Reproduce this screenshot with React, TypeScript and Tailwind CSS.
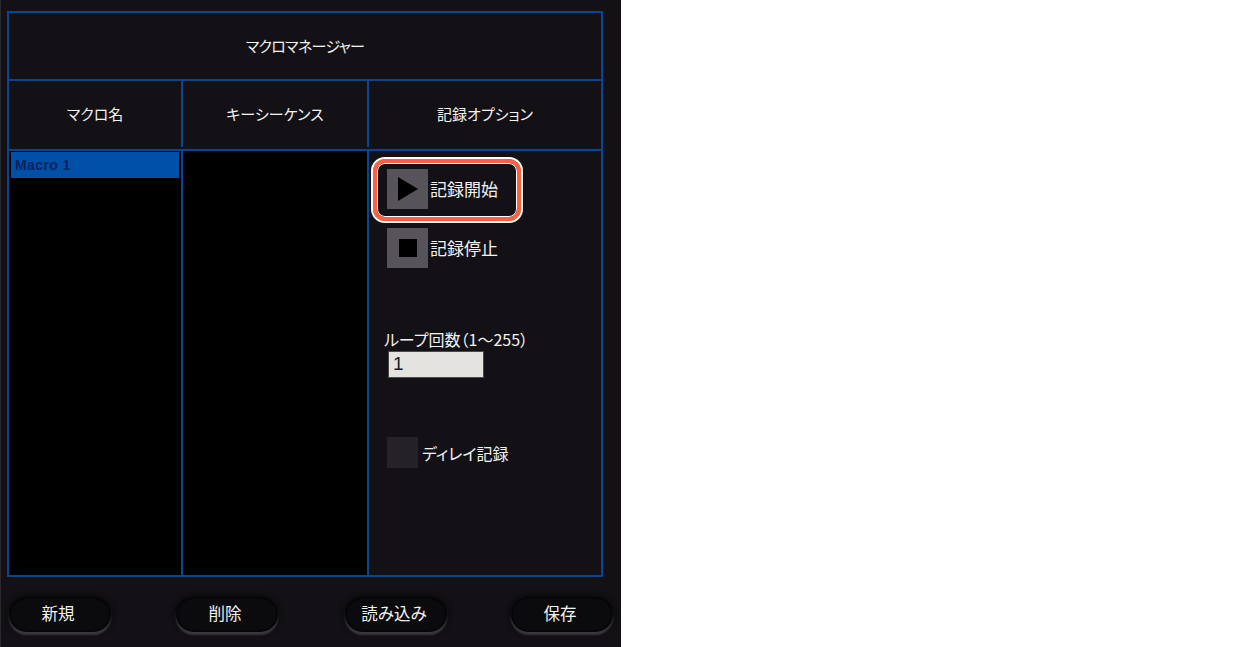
const font = "font-['Noto_Sans_CJK_JP',sans-serif] [font-feature-settings:'palt']";

function FooterButton({ label, className }: { label: string; className?: string }) {
  return (
    <div
      className={`w-[102px] h-[35px] pb-[3px] pr-[4px] rounded-[18px] bg-[#0b0a0c] border-2 border-[#060507] flex items-center justify-center text-[16.5px] text-[#f2f2f2] shadow-[0_3px_2px_#3a383d,0_0_5px_2px_#0a090b] ${className ?? ''}`}
    >
      {label}
    </div>
  );
}

export default function App() {
  return (
    <div className={`flex h-[647px] w-[1240px] bg-white overflow-hidden ${font}`}>
      <div className="w-[621px] h-full bg-[#131116] pl-[7px] pt-[11px] border-l border-[#2a282c]">
        <div className="w-[596px] h-[566px] -ml-px flex flex-col border-2 border-[#0a4590] text-[#f2f2f2]">
          <div className="h-[68px] flex items-center justify-center border-b-2 border-[#0a4590] text-[15px] tracking-[-0.7px]">
            マクロマネージャー
          </div>
          <div className="h-[70px] pb-[2px] grid grid-cols-[174px_186px_1fr] border-b-2 border-[#0a4590] text-[15px]">
            <div className="flex items-center justify-center border-r-2 border-[#0a4590]">マクロ名</div>
            <div className="flex items-center justify-center border-r-2 border-[#0a4590]">キーシーケンス</div>
            <div className="flex items-center justify-center">記録オプション</div>
          </div>
          <div className="flex-1 grid grid-cols-[174px_186px_1fr] min-h-0">
            <div className="bg-black border-r-2 border-[#0a4590] pt-[1px] pl-[2px]">
              <div className="w-[168px] h-[26px] bg-[#0050a8] pl-[4px] flex items-center text-[14px] font-bold tracking-[0.4px] text-[#03245e] font-['Liberation_Sans',sans-serif]">
                Macro 1
              </div>
            </div>
            <div className="bg-black border-r-2 border-[#0a4590]" />
            <div className="relative pl-[18px] pt-[18px] text-[17px]">
              <div className="absolute left-[4px] top-[8px] w-[148px] h-[62px] rounded-[12px] border-[4px] border-[#ff6040] outline-[2px] outline-solid outline-white shadow-[inset_0_0_0_1px_white]" />
              <div className="flex items-center h-[40px]">
                <div className="w-[41px] h-[40px] bg-[#57535a] flex items-center justify-center shrink-0">
                  <svg width="20" height="24" viewBox="0 0 20 24" className="ml-[1px]">
                    <path d="M0 0 L20 12 L0 24 Z" fill="#000" />
                  </svg>
                </div>
                <span className="ml-[2px]">記録開始</span>
              </div>
              <div className="flex items-center h-[40px] mt-[19px]">
                <div className="w-[41px] h-[40px] bg-[#57535a] flex items-center justify-center shrink-0">
                  <div className="w-[18px] h-[18px] bg-black" />
                </div>
                <span className="ml-[2px]">記録停止</span>
              </div>
              <div className="mt-[60px] -ml-[3px] text-[16px] leading-[22px]">ループ回数（1～255）</div>
              <div className="w-[96px] h-[27px] ml-[1px] mt-[1px] bg-[#e4e3df] border border-[#4a484c] pl-[4px] flex items-center text-[19px] text-[#16202c] font-['Liberation_Sans',sans-serif]">
                1
              </div>
              <div className="flex items-center mt-[59px]">
                <div className="w-[31px] h-[31px] bg-[#242227] shrink-0" />
                <span className="ml-[4px] text-[16px]">ディレイ記録</span>
              </div>
            </div>
          </div>
        </div>
        <div className="flex ml-[1px] mt-[20px]">
          <FooterButton label="新規" />
          <FooterButton label="削除" className="ml-[65px]" />
          <FooterButton label="読み込み" className="ml-[67px]" />
          <FooterButton label="保存" className="ml-[64px]" />
        </div>
      </div>
    </div>
  );
}
